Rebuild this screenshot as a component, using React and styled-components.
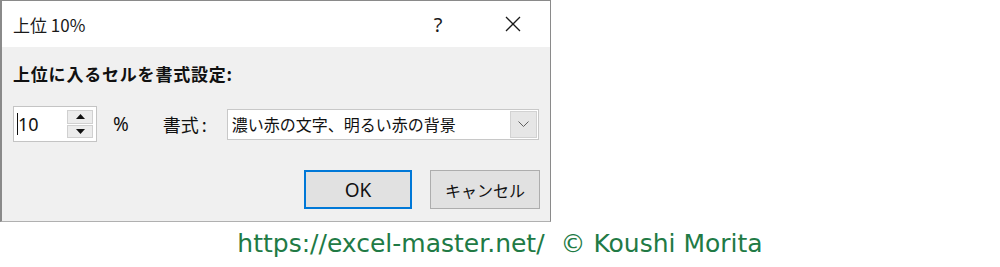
import React from "react";
import styled, { createGlobalStyle } from "styled-components";

const Global = createGlobalStyle`
  html, body { margin: 0; padding: 0; background: #ffffff; }
  body { font-family: "Noto Sans CJK JP", "Noto Sans", sans-serif; }
`;

const Page = styled.div`
  width: 1000px;
  height: 267px;
  position: relative;
  background: #fff;
  overflow: hidden;
`;

const Dialog = styled.div`
  width: 548px;
  height: 220px;
  border: 1px solid #8a8a8a;
  border-left: 2px solid #8a8a8a;
  border-bottom-color: #b0b0b0;
  background: #f0f0f0;
  display: flex;
  flex-direction: column;
`;

const TitleBar = styled.div`
  height: 46px;
  background: #ffffff;
  display: flex;
  align-items: center;
  padding-left: 11px;
  color: #1a1a1a;
`;

const Title = styled.div`
  flex: 1;
  font-size: 17px;
  font-family: "Noto Sans CJK JP", sans-serif;
`;

const TitleButton = styled.div`
  width: 46px;
  height: 46px;
  margin-right: ${(p) => p.$mr}px;
  display: flex;
  align-items: center;
  justify-content: center;
  color: #1a1a1a;
  font-family: "Noto Sans", sans-serif;
  font-size: 20px;
`;

const Body = styled.div`
  flex: 1;
  padding: 14px 10px 12px 11px;
  display: flex;
  flex-direction: column;
`;

const Heading = styled.div`
  font-weight: 700;
  font-size: 17px;
  letter-spacing: 0.8px;
  line-height: 26px;
  color: #111;
`;

const Row = styled.div`
  margin-top: 19px;
  display: flex;
  align-items: center;
  height: 36px;
`;

const Spin = styled.div`
  width: 82px;
  height: 34px;
  border: 1px solid #c4c4c4;
  background: #fff;
  display: flex;
  box-sizing: content-box;
`;

const SpinInput = styled.div`
  flex: 1;
  display: flex;
  align-items: center;
  padding-left: 3px;
  font-family: "Noto Sans", sans-serif;
  font-size: 18px;
  color: #111;
`;

const Caret = styled.span`
  display: inline-block;
  width: 1px;
  height: 22px;
  background: #111;
`;

const SpinButtons = styled.div`
  width: 26px;
  display: flex;
  flex-direction: column;
  padding: 3px 3px 3px 0;
  gap: 1px;
`;

const SpinBtn = styled.div`
  flex: 1;
  background: #ececec;
  border: 1px solid #d0d0d0;
  display: flex;
  align-items: center;
  justify-content: center;
`;

const Label = styled.div`
  font-size: ${(p) => (p.$latin ? 19 : 18)}px;
  color: #111;
  margin-left: ${(p) => p.$ml}px;
  font-family: ${(p) => (p.$latin ? '"Noto Sans", sans-serif' : '"Noto Sans CJK JP", sans-serif')};
`;

const Colon = styled.span`
  margin-left: 3px;
`;

const Combo = styled.div`
  margin-left: 20px;
  width: 310px;
  height: 29px;
  border: 1px solid #c8c8c8;
  background: #fff;
  display: flex;
  align-items: center;
`;

const ComboText = styled.div`
  flex: 1;
  padding-left: 4px;
  font-size: 16px;
  color: #111;
  white-space: nowrap;
`;

const ComboBtn = styled.div`
  width: 27px;
  height: 27px;
  margin-right: 1px;
  background: #e6e6e6;
  border: 1px solid #d2d2d2;
  box-sizing: border-box;
  display: flex;
  align-items: center;
  justify-content: center;
`;

const Buttons = styled.div`
  margin-top: auto;
  display: flex;
  justify-content: flex-end;
  gap: 18px;
`;

const Button = styled.div`
  width: ${(p) => p.$w}px;
  height: 39px;
  box-sizing: border-box;
  background: #e1e1e1;
  border: ${(p) => (p.$primary ? "2px solid #0078d7" : "1px solid #adadad")};
  display: flex;
  align-items: center;
  justify-content: center;
  font-size: ${(p) => (p.$latin ? 19 : 16)}px;
  color: #111;
  font-family: ${(p) => (p.$latin ? '"Noto Sans", sans-serif' : '"Noto Sans CJK JP", sans-serif')};
`;

const Footer = styled.div`
  position: absolute;
  left: 0;
  right: 0;
  top: 229px;
  text-align: center;
  font-family: "DejaVu Sans", Verdana, sans-serif;
  font-size: 25px;
  color: #217a45;
  white-space: pre;
`;

export default function App() {
  return (
    <Page>
      <Global />
      <Dialog>
        <TitleBar>
          <Title>上位 10%</Title>
          <TitleButton $mr={29}>?</TitleButton>
          <TitleButton $mr={14}>
            <svg width="16" height="16" viewBox="0 0 16 16">
              <path d="M1 1 L15 15 M15 1 L1 15" stroke="#1a1a1a" strokeWidth="1.3" />
            </svg>
          </TitleButton>
        </TitleBar>
        <Body>
          <Heading>上位に入るセルを書式設定:</Heading>
          <Row>
            <Spin>
              <SpinInput>
                <Caret />
                10
              </SpinInput>
              <SpinButtons>
                <SpinBtn>
                  <svg width="9" height="5" viewBox="0 0 9 5">
                    <path d="M0 5 L4.5 0 L9 5 Z" fill="#111" />
                  </svg>
                </SpinBtn>
                <SpinBtn>
                  <svg width="9" height="5" viewBox="0 0 9 5">
                    <path d="M0 0 L4.5 5 L9 0 Z" fill="#111" />
                  </svg>
                </SpinBtn>
              </SpinButtons>
            </Spin>
            <Label $ml={16} $latin>%</Label>
            <Label $ml={34}>
              書式<Colon>:</Colon>
            </Label>
            <Combo>
              <ComboText>濃い赤の文字、明るい赤の背景</ComboText>
              <ComboBtn>
                <svg width="11" height="6" viewBox="0 0 11 6">
                  <path d="M0.5 0.5 L5.5 5.5 L10.5 0.5" fill="none" stroke="#606060" strokeWidth="1" />
                </svg>
              </ComboBtn>
            </Combo>
          </Row>
          <Buttons>
            <Button $w={108} $primary $latin>OK</Button>
            <Button $w={110}>キャンセル</Button>
          </Buttons>
        </Body>
      </Dialog>
      <Footer>{"https://excel-master.net/  © Koushi Morita"}</Footer>
    </Page>
  );
}
